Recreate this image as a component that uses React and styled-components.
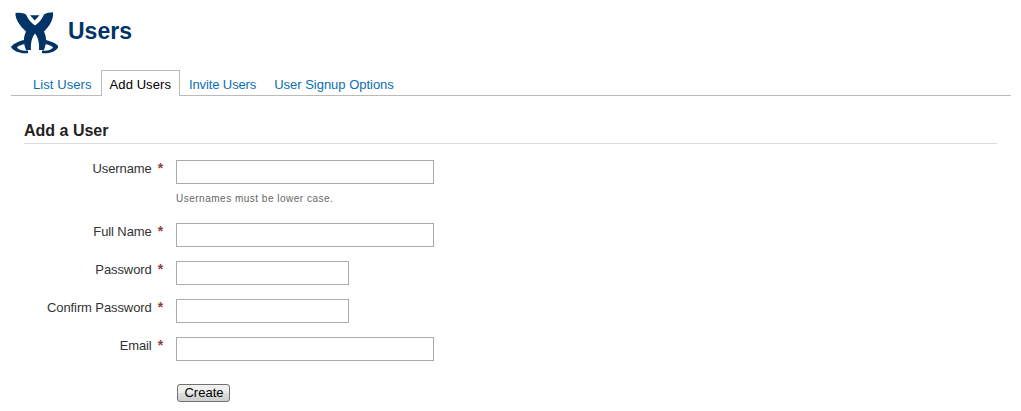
import React from "react";
import styled, { createGlobalStyle } from "styled-components";

const Global = createGlobalStyle`
  html, body { margin: 0; padding: 0; background: #fff; }
  body { font-family: "Liberation Sans", Arial, sans-serif; font-size: 13px; color: #333; }
`;
const Page = styled.div`
  width: 1021px; height: 411px; overflow: hidden; box-sizing: border-box; padding: 0 10px 0 11px;
`;
const Header = styled.header`
  height: 70px; display: flex; align-items: flex-start; gap: 10px;
`;
const Logo = styled.svg`
  width: 47px; height: 44px; margin-top: 11px; flex: none;
`;
const Title = styled.h1`
  margin: 16px 0 0; font-size: 23px; line-height: 30px; font-weight: bold; color: #003366;
`;
const Tabs = styled.nav`
  display: flex; height: 26px; box-sizing: border-box; border-bottom: 1px solid #bbb; padding-left: 13px;
`;
const Tab = styled.a`
  box-sizing: border-box; height: ${p => (p.$active ? "26px" : "25px")};
  padding: ${p => (p.$active ? "6px 8px 0" : "7px 9px 0")};
  font-size: 13px; letter-spacing: ${p => p.$track}px; line-height: 15px; white-space: nowrap;
  color: ${p => (p.$active ? "#000" : "#0b6eb0")};
  background: #fff;
  ${p => p.$active && "border: 1px solid #bbb; border-bottom: 0;"}
`;
const Content = styled.main`
  padding: 26px 14px 0 13px;
`;
const Heading = styled.h2`
  margin: 0; font-size: 16px; line-height: 18px; font-weight: bold; color: #222;
  padding-bottom: 3px; border-bottom: 1px solid #ddd;
`;
const Form = styled.form`
  display: flex; flex-direction: column; padding-top: 16px;
`;
const Row = styled.div`
  display: grid; grid-template-columns: 142px 1fr; column-gap: 10px; margin-bottom: ${p => p.$gap}px;
`;
const Label = styled.label`
  font-size: 13px; letter-spacing: -0.1px; line-height: 16px; padding-right: 3px; box-sizing: border-box; color: #333; white-space: nowrap; width: 142px; text-align: right;
`;
const Star = styled.span`
  color: #8f3f3f; font-weight: bold; font-size: 14px; margin-left: 6px;
`;
const Input = styled.input`
  display: block; box-sizing: border-box; height: 24px; width: ${p => p.$w}px; border: 1px solid #aaa; background: #fff; margin: 0; padding: 1px 3px;
`;
const Hint = styled.div`
  font-size: 10px; line-height: 12px; margin-top: 9px; margin-bottom: 4px; color: #666; letter-spacing: 0.5px;
`;
const Button = styled.button`
  display: block; box-sizing: border-box; width: 53px; height: 18px; margin: 0 0 0 1px; padding: 0 0 0 1px; grid-column: 2;
  font-family: inherit; font-size: 13px; line-height: 14px; color: #000; border: 1px solid #707070; border-radius: 3px;
  background: linear-gradient(#f2f2f2 0%, #ebebeb 50%, #ddd 51%, #cfcfcf 100%);
`;

const Field = ({ label, w, gap, hint }) => (
  <Row $gap={gap}>
    <Label>{label}<Star>*</Star></Label>
    <div>
      <Input $w={w} />
      {hint && <Hint>{hint}</Hint>}
    </div>
  </Row>
);

export default function App() {
  return (
    <Page>
      <Global />
      <Header>
        <Logo viewBox="11 11 47 44">
          <path fill="#003366" d="M15.5 13 C20 12.3 24 13 26 14.6 C28 19 31 23 35 25.5 C39 23 42 19 44 14.6 C46 13 50 12.3 53 12.3 C53.8 19 50 26 44 31.5 C46 36 47.5 41 44 50 L39 50 C39.5 43 38 37 35 33.5 C32 37 30.5 43 31 50 L26 50 C22.5 41 24 36 26 31.5 C20 26 15 19 15.5 13 Z" />
          <path fill="#003366" d="M30 15.3 L39.5 15.3 L34.8 20.5 Z" />
          <path fill="#003366" d="M11 47 C13 44 18 41.5 24 40 L25 44 C22 44.5 17.5 46 17 47.5 C19 50.5 24 51 28 50.5 L28 53 C22 54 14 52 11 47 Z M58.7 46.5 C57 44 52 41.5 46 40 L45 44 C48 44.5 52.5 46 53 47.5 C51 50.5 46 51 42 50.5 L42 53 C48 54 56 52 58.7 46.5 Z" />
        </Logo>
        <Title>Users</Title>
      </Header>
      <Tabs>
        <Tab $track={0.08}>List Users</Tab>
        <Tab $active $track={0.08}>Add Users</Tab>
        <Tab $track={-0.12}>Invite Users</Tab>
        <Tab $track={-0.02}>User Signup Options</Tab>
      </Tabs>
      <Content>
        <Heading>Add a User</Heading>
        <Form>
          <Field label="Username" w={258} gap={14} hint="Usernames must be lower case." />
          <Field label="Full Name" w={258} gap={14} />
          <Field label="Password" w={173} gap={14} />
          <Field label="Confirm Password" w={173} gap={14} />
          <Field label="Email" w={258} gap={23} />
          <Row $gap={0}>
            <Button type="button">Create</Button>
          </Row>
        </Form>
      </Content>
    </Page>
  );
}
